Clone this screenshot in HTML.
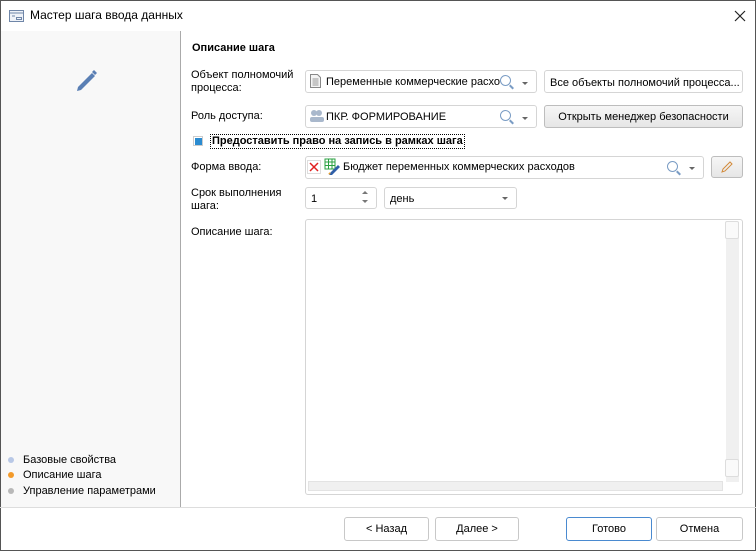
<!DOCTYPE html>
<html><head><meta charset="utf-8"><style>
*{box-sizing:border-box;margin:0;padding:0}
body{width:756px;height:551px;background:#fff;font-family:"Liberation Sans","DejaVu Sans",sans-serif;font-size:11px;color:#000;position:relative;overflow:hidden}
.win{position:absolute;left:0;top:0;width:756px;height:551px;border:1px solid #555;}
.a{position:absolute}
.box{position:absolute;border:1px solid #d5d5d5;border-radius:3px;background:#fff}
.btn{position:absolute;border:1px solid #c8c8c8;border-radius:3px;background:#fff;text-align:center;line-height:22px;font-size:11px}
.gbtn{background:linear-gradient(#f6f6f6,#e6e6e6);border-color:#bdbdbd}
.lbl{position:absolute;left:191px;line-height:13px}
.arr{position:absolute;width:0;height:0;border-left:3px solid transparent;border-right:3px solid transparent;border-top:3px solid #666}
.mag{position:absolute;width:11px;height:11px;border:1.5px solid #7a9cc4;border-radius:50%}
.mag:after{content:"";position:absolute;left:8px;top:10px;width:5px;height:2px;background:#7a9cc4;transform:rotate(45deg)}
.dot{position:absolute;left:8px;width:6px;height:6px;border-radius:50%}
</style></head><body>
<div class="win"></div>
<svg class="a" style="left:9px;top:10px" width="15" height="12"><rect x="0.5" y="0.5" width="14" height="11" fill="#eef2f8" stroke="#6f86a8"/><line x1="0.5" y1="3" x2="14.5" y2="3" stroke="#6f86a8"/><line x1="3" y1="6" x2="6" y2="6" stroke="#6f86a8"/><rect x="7.5" y="7.5" width="5" height="2" fill="none" stroke="#6f86a8"/></svg>
<div class="a" style="left:30px;top:8px;font-size:12px">Мастер шага ввода данных</div>
<svg class="a" style="left:734px;top:10px" width="12" height="12"><path d="M1 1L11 11M11 1L1 11" stroke="#222" stroke-width="1.2"/></svg>
<div class="a" style="left:1px;top:31px;width:179px;height:476px;background:#f8f8f8"></div>
<div class="a" style="left:180px;top:31px;width:1px;height:476px;background:#aaa"></div>
<svg class="a" style="left:72px;top:67px" width="27" height="27"><path d="M6 20L20 6l3 3L9 23l-4 1z" fill="#5a7fb4"/><path d="M20 5l2-2 3 3-2 2z" fill="#5a7fb4"/></svg>
<div class="dot" style="top:457px;background:#b8c8e6"></div><div class="a" style="left:23px;top:454px">Базовые свойства</div>
<div class="dot" style="top:472px;background:#f39a2a"></div><div class="a" style="left:23px;top:469px">Описание шага</div>
<div class="dot" style="top:488px;background:#b8b8b8"></div><div class="a" style="left:23px;top:485px">Управление параметрами</div>
<div class="a" style="left:192px;top:42px;font-weight:bold">Описание шага</div>
<div class="lbl" style="top:69px">Объект полномочий<br>процесса:</div>
<div class="box" style="left:305px;top:70px;width:232px;height:23px"></div>
<svg class="a" style="left:310px;top:74px" width="11" height="14"><path d="M.5 .5h7l3 3v10H.5z" fill="#f4f4f4" stroke="#888"/><path d="M2.5 5h6M2.5 7h6M2.5 9h6M2.5 11h6" stroke="#999"/></svg>
<div class="a" style="left:326px;top:76px">Переменные коммерческие расхо</div>
<div class="mag" style="left:500px;top:75px"></div><div class="arr" style="left:522px;top:82px"></div>
<div class="box" style="left:544px;top:70px;width:199px;height:23px;padding:6px 0 0 5px">Все объекты полномочий процесса...</div>
<div class="lbl" style="top:110px">Роль доступа:</div>
<div class="box" style="left:305px;top:105px;width:232px;height:23px"></div>
<svg class="a" style="left:309px;top:109px" width="16" height="14"><circle cx="5" cy="4" r="3" fill="#a9b8cc"/><circle cx="10" cy="4" r="3" fill="#a9b8cc"/><rect x="1" y="8" width="14" height="5" rx="2" fill="#a9b8cc"/></svg>
<div class="a" style="left:326px;top:111px">ПКР. ФОРМИРОВАНИЕ</div>
<div class="mag" style="left:500px;top:110px"></div><div class="arr" style="left:522px;top:117px"></div>
<div class="btn gbtn" style="left:544px;top:105px;width:199px;height:23px">Открыть менеджер безопасности</div>
<div class="a" style="left:193px;top:136px;width:10px;height:10px;border:1px solid #ccc;background:#fff"></div>
<div class="a" style="left:195px;top:138px;width:7px;height:7px;background:#2b8bd0"></div>
<div class="a" style="left:210px;top:134px;border:1px dotted #000;padding:0 1px;font-weight:bold;line-height:13px">Предоставить право на запись в рамках шага</div>
<div class="lbl" style="top:161px">Форма ввода:</div>
<div class="box" style="left:305px;top:156px;width:399px;height:23px"></div>
<svg class="a" style="left:307px;top:160px" width="14" height="14"><rect x=".5" y=".5" width="13" height="13" fill="#fff" stroke="#ddd"/><path d="M3 3l8 8M11 3l-8 8" stroke="#e02020" stroke-width="1.5"/></svg>
<svg class="a" style="left:324px;top:158px" width="18" height="17"><path d="M1 1h10v10H1z" fill="#fff" stroke="#2aa040"/><path d="M1 4h10M1 7.5h10M4.5 1v10M8 1v10" stroke="#2aa040"/><path d="M6 15l8-8 2 2-8 8-3 1z" fill="#2f5fa8"/><path d="M5 15l1 1" stroke="#e8a030" stroke-width="2"/></svg>
<div class="a" style="left:343px;top:161px">Бюджет переменных коммерческих расходов</div>
<div class="mag" style="left:667px;top:161px"></div><div class="arr" style="left:689px;top:167px"></div>
<div class="btn gbtn" style="left:711px;top:156px;width:32px;height:22px"></div>
<svg class="a" style="left:720px;top:160px" width="14" height="14"><path d="M2 12l1-3 7-7 2 2-7 7z" fill="none" stroke="#d28a3a"/></svg>
<div class="lbl" style="top:187px">Срок выполнения<br>шага:</div>
<div class="box" style="left:305px;top:187px;width:72px;height:22px;padding:5px 0 0 5px">1</div>
<div class="a" style="left:362px;top:191px;border-left:3px solid transparent;border-right:3px solid transparent;border-bottom:3px solid #777"></div>
<div class="arr" style="left:362px;top:200px;border-top-color:#777"></div>
<div class="box" style="left:384px;top:187px;width:133px;height:22px;padding:5px 0 0 5px">день</div>
<div class="arr" style="left:502px;top:197px"></div>
<div class="lbl" style="top:226px">Описание шага:</div>
<div class="box" style="left:305px;top:219px;width:438px;height:276px"></div>
<div class="a" style="left:726px;top:222px;width:13px;height:260px;background:#f0f0f0"></div>
<div class="a" style="left:725px;top:221px;width:14px;height:18px;border:1px solid #ddd;border-radius:2px;background:#fafafa"></div>
<div class="a" style="left:725px;top:459px;width:14px;height:18px;border:1px solid #ddd;border-radius:2px;background:#fafafa"></div>
<div class="a" style="left:308px;top:481px;width:415px;height:10px;background:#f0f0f0;border:1px solid #e3e3e3"></div>
<div class="a" style="left:0;top:507px;width:756px;height:1px;background:#ddd"></div>
<div class="btn" style="left:344px;top:517px;width:85px;height:24px">&lt; Назад</div>
<div class="btn" style="left:435px;top:517px;width:84px;height:24px">Далее &gt;</div>
<div class="btn" style="left:566px;top:517px;width:86px;height:24px;border-color:#4a8ad0">Готово</div>
<div class="btn" style="left:656px;top:517px;width:87px;height:24px">Отмена</div>
</body></html>
